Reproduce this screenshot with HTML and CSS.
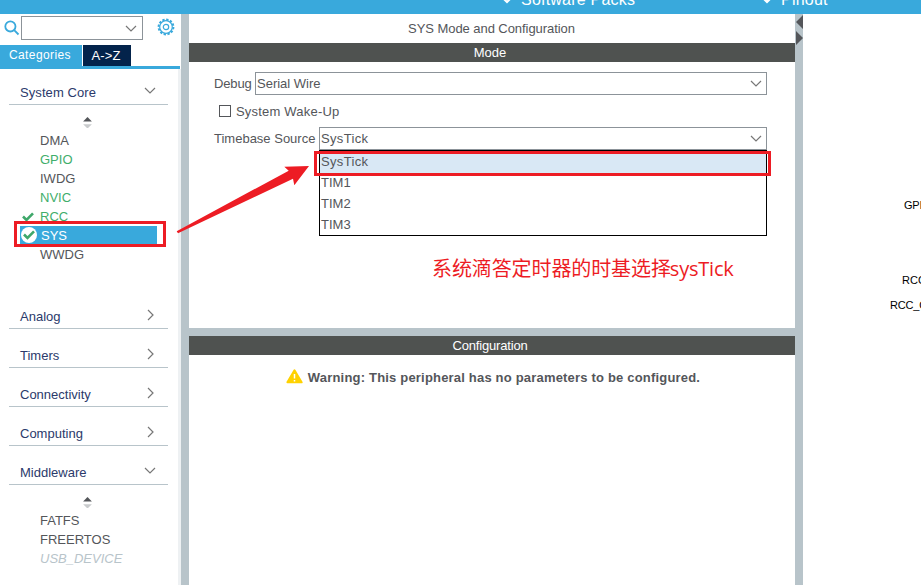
FILE: index.html
```html
<!DOCTYPE html>
<html lang="en">
<head>
<meta charset="utf-8">
<title>SYS Mode and Configuration</title>
<link rel="stylesheet" href="styles.css">
</head>
<body>
<div class="app">
  <header class="topbar">
    <div class="menu menu-packs"><svg class="menu-check" viewBox="0 0 10 8"><path d="M1 2l4 4 4-4"/></svg><span>Software Packs</span></div>
    <div class="menu menu-pinout"><svg class="menu-check" viewBox="0 0 10 8"><path d="M1 2l4 4 4-4"/></svg><span>Pinout</span></div>
  </header>
  <div class="workspace">
    <aside class="sidebar">
      <div class="search">
        <svg class="lens" viewBox="0 0 16 16"><circle cx="6.4" cy="6.4" r="5.1"/><path d="M10.2 10.2l4.3 4.3"/></svg>
        <div class="combo search-combo"><svg class="chev-down" viewBox="0 0 12 7"><path d="M1 1l5 5 5-5"/></svg></div>
        <svg class="gear" viewBox="0 0 18 18"><circle class="teeth" cx="9" cy="9" r="7.4"/><circle cx="9" cy="9" r="6.3"/><circle cx="9" cy="9" r="2.7"/></svg>
      </div>
      <nav class="tabs"><div class="tab tab-on">Categories</div><div class="tab tab-az">A-&gt;Z</div></nav>
      <div class="tree">
        <div class="group group-first"><span>System Core</span><svg class="chev-down" viewBox="0 0 12 7"><path d="M1 1l5 5 5-5"/></svg></div>
        <div class="sorter"><svg viewBox="0 0 8 10"><path class="up" d="M0 4L4 0l4 4z"/><path class="down" d="M0 6.5h8l-4 4z"/></svg></div>
        <ul class="items">
          <li>DMA</li>
          <li class="ok">GPIO</li>
          <li>IWDG</li>
          <li class="ok">NVIC</li>
          <li class="ok"><svg class="tick" viewBox="0 0 12 10"><path d="M1 4.5l3.5 3.5L11 1.3"/></svg>RCC</li>
          <li class="selected"><span class="disc"><svg class="tick" viewBox="0 0 12 10"><path d="M1 4.5l3.5 3.5L11 1.3"/></svg></span>SYS</li>
          <li>WWDG</li>
        </ul>
        <div class="group after-items"><span>Analog</span><svg class="chev-right" viewBox="0 0 7 12"><path d="M1 1l5 5-5 5"/></svg></div>
        <div class="group"><span>Timers</span><svg class="chev-right" viewBox="0 0 7 12"><path d="M1 1l5 5-5 5"/></svg></div>
        <div class="group"><span>Connectivity</span><svg class="chev-right" viewBox="0 0 7 12"><path d="M1 1l5 5-5 5"/></svg></div>
        <div class="group"><span>Computing</span><svg class="chev-right" viewBox="0 0 7 12"><path d="M1 1l5 5-5 5"/></svg></div>
        <div class="group"><span>Middleware</span><svg class="chev-down" viewBox="0 0 12 7"><path d="M1 1l5 5 5-5"/></svg></div>
        <div class="sorter"><svg viewBox="0 0 8 10"><path class="up" d="M0 4L4 0l4 4z"/><path class="down" d="M0 6.5h8l-4 4z"/></svg></div>
        <ul class="items">
          <li>FATFS</li>
          <li>FREERTOS</li>
          <li class="disabled">USB_DEVICE</li>
        </ul>
      </div>
    </aside>
    <div class="splitter"></div>
    <main class="main">
      <section class="mode">
        <h1 class="title">SYS Mode and Configuration</h1>
        <h2 class="bar">Mode</h2>
        <div class="form">
          <div class="field"><label class="debug">Debug</label><div class="combo"><span>Serial Wire</span><svg class="chev-down" viewBox="0 0 12 7"><path d="M1 1l5 5 5-5"/></svg></div></div>
          <div class="field check"><span class="box"></span><label>System Wake-Up</label></div>
          <div class="field"><label class="timebase">Timebase Source</label>
            <div class="combo"><span class="systick">SysTick</span><svg class="chev-down" viewBox="0 0 12 7"><path d="M1 1l5 5 5-5"/></svg>
              <ul class="dropdown"><li class="picked systick">SysTick</li><li>TIM1</li><li>TIM2</li><li>TIM3</li></ul>
            </div>
          </div>
        </div>
        <p class="note" lang="zh">系统滴答定时器的时基选择<span class="note-latin">sysTick</span></p>
      </section>
      <section class="config">
        <h2 class="bar bar-config">Configuration</h2>
        <p class="warning"><svg viewBox="0 0 17 15"><path class="tri" d="M8.5 1.3L15.6 13.3H1.4z"/><path class="mark" d="M8.5 5v4.5M8.5 11v1.6"/></svg><span>Warning: This peripheral has no parameters to be configured.</span></p>
      </section>
    </main>
    <div class="splitter"><svg class="grips" viewBox="0 0 8 32"><path d="M8 1v14L1 8zM1 17v14l7-7z"/></svg></div>
    <div class="pinout">
      <span class="pin pin-gpio">GPIO</span>
      <span class="pin pin-rcc">RCC_OSC</span>
      <span class="pin pin-osc">RCC_OSC</span>
    </div>
  </div>
  <div class="frame frame-sys"></div>
  <div class="frame frame-tick"></div>
  <svg class="arrow" viewBox="170 155 145 85"><path d="M176.7 231.2L288.7 170.7 284.3 166.7 309 166 294.3 185.3 293 178.7 178 233.3z"/></svg>
</div>
</body>
</html>
```
FILE: styles.css
```css
* { box-sizing: border-box; }
body { margin: 0; background: #fff; color: #54565a; font: 13px/19px "Liberation Sans", Arial, sans-serif; }
h1, h2, p, ul { margin: 0; padding: 0; font-size: 13px; font-weight: normal; list-style: none; }
svg { display: block; fill: none; flex: none; }
.app { position: relative; width: 921px; height: 585px; overflow: hidden; display: flex; flex-direction: column; }

.topbar { height: 14px; flex: none; background: #39a9dc; color: #fff; display: flex; overflow: hidden; font-size: 16px; letter-spacing: .22px; }
.menu { display: flex; align-items: flex-start; height: 20px; margin-top: -10px; }
.menu-check { width: 10px; height: 8px; margin: 6px 9px 0 0; stroke: #fff; stroke-width: 2.2; }
.menu-packs { margin-left: 502px; width: 260px; }

.workspace { flex: 1; min-height: 0; display: flex; }
.splitter { width: 8px; flex: none; background: #b8c4ca; }
.grips { width: 8px; height: 32px; fill: #54565a; }

.sidebar { width: 181px; flex: none; display: flex; flex-direction: column; }
.search { height: 31px; display: flex; align-items: flex-start; padding: 2px 0 0 4px; }
.lens { width: 16px; height: 16px; margin: 4px 1px 0 0; stroke: #39a9dc; stroke-width: 1.8; }
.combo { position: relative; height: 23px; border: 1px solid #8c9399; display: flex; align-items: center; justify-content: space-between; padding: 0 4px 0 1px; }
.search-combo { width: 122px; height: 24px; justify-content: flex-end; padding-right: 5px; }
.gear { width: 18px; height: 18px; margin: 2px 0 0 14px; stroke: #39a9dc; stroke-width: 1.2; }
.teeth { stroke-width: 2; stroke-dasharray: 2.3 1.57; }
.tabs { height: 24px; width: 180px; border-bottom: 3px solid #39a9dc; display: flex; gap: 1px; color: #fff; line-height: 21px; font-size: 12px; }
.tab { text-align: center; }
.tab-on { width: 82px; padding-right: 2px; background: #39a9dc; letter-spacing: .4px; }
.tab-az { width: 48px; padding-right: 2px; background: #03234b; font-size: 13px; letter-spacing: .1px; }
.tree { flex: 1; padding: 0 10px 0 9px; border-right: 3px solid #eef1f3; }
.group { height: 39px; padding: 0 11px 2px; border-bottom: 1px solid #b8c4ca; display: flex; align-items: flex-end; justify-content: space-between; color: #2b3a6b; }
.group-first { height: 36px; letter-spacing: .08px; }
.after-items { margin-top: 26px; }
.chev-down { width: 12px; height: 7px; stroke: #777; stroke-width: 1.2; }
.chev-right { width: 7px; height: 12px; stroke: #777; stroke-width: 1.2; }
.group .chev-down { margin-bottom: 8px; margin-right: 1px; }
.group .chev-right { margin: 0 3px 5px 0; }
.sorter { height: 26px; padding: 12px 0 0 74px; }
.sorter svg { width: 9px; height: 11px; }
.up { fill: #54565a; }
.down { fill: #c9cbcd; }
.items li { height: 19px; display: flex; align-items: center; padding-left: 31px; }
.items .ok { color: #3fae6b; }
.items .disabled { color: #b8c4ca; font-style: italic; }
.tick { width: 12px; height: 10px; stroke: #3fa86a; stroke-width: 2.6; }
.ok .tick { margin: 0 6px 0 -18px; }
.items .selected { height: 18px; margin: 0 2px 1px 11px; padding-left: 1px; background: linear-gradient(#39a9dc, #39a9dc) 0 0 / 137px 100% no-repeat; color: #fff; }
.disc { width: 16px; height: 16px; margin-right: 4px; border-radius: 8px; background: #fff; display: flex; align-items: center; justify-content: center; }

.main { width: 606px; flex: none; display: flex; flex-direction: column; }
.mode { height: 314px; }
.title { height: 29px; line-height: 29px; letter-spacing: -.06px; padding-right: 1px; text-align: center; }
.bar { height: 19px; background: #4f5250; color: #fff; text-align: center; padding-right: 4px; }
.bar-config { letter-spacing: -.18px; }
.form { padding: 10px 28px 0 25px; }
.field { display: flex; align-items: center; height: 23px; }
.field .combo { flex: 1; }
.debug { width: 41px; letter-spacing: -.15px; }
.timebase { width: 105px; }
.systick { letter-spacing: .35px; }
.check { height: 32px; padding-left: 5px; letter-spacing: .2px; }
.box { width: 12px; height: 12px; border: 1px solid #54565a; margin-right: 5px; }
.dropdown { position: absolute; z-index: 1; left: -1px; right: -1px; top: 22px; height: 86px; border: 1px solid #000; background: #fff; padding-top: 1px; }
.dropdown li { height: 21px; line-height: 20px; padding-left: 1px; }
.dropdown .picked { background: #d9e8f5; }
.note { margin: 103px 0 0 243px; color: #ed1c24; font: 20px/30px "Noto Sans CJK SC", sans-serif; letter-spacing: -.1px; white-space: nowrap; }
.note-latin { margin-left: -1px; font-family: "Open Sans", "Noto Sans", sans-serif; letter-spacing: -.2px; }
.config { border-top: 8px solid #b8c4ca; flex: 1; }
.warning { display: flex; justify-content: center; padding-top: 13px; padding-left: 2px; font-weight: bold; letter-spacing: .19px; }
.warning svg { width: 17px; height: 15px; margin: 1px 5px 0 0; }
.tri { fill: #ffd200; stroke: #ffd200; stroke-width: 2; stroke-linejoin: round; }
.mark { stroke: #fff; stroke-width: 1.5; }

.pinout { position: relative; flex: 1; min-width: 0; overflow: hidden; color: #000; font-size: 11px; line-height: 14px; }
.pin { position: absolute; white-space: nowrap; }
.pin-gpio { left: 101px; top: 184px; letter-spacing: -.2px; }
.pin-rcc { left: 99px; top: 259px; }
.pin-osc { left: 87px; top: 284px; letter-spacing: -.2px; }

.frame { position: absolute; z-index: 3; border: 3px solid #ed1c24; }
.frame-sys { left: 14px; top: 221px; width: 152px; height: 26px; }
.frame-tick { left: 314px; top: 151px; width: 457px; height: 25px; }
.arrow { position: absolute; z-index: 3; left: 170px; top: 155px; width: 145px; height: 85px; fill: #ed1c24; }
```
